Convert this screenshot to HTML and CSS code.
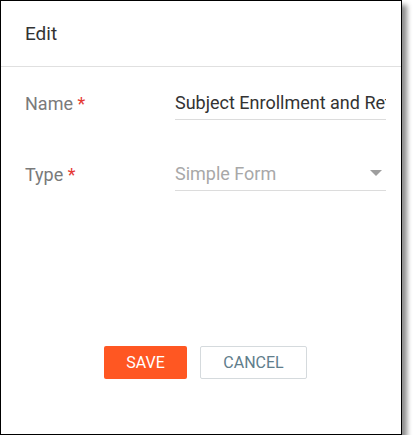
FILE: index.html
```html
<!DOCTYPE html>
<html>
<head>
<meta charset="utf-8">
<link rel="stylesheet" href="styles.css">
</head>
<body>
<div class="dialog">
  <div class="header">Edit</div>
  <div class="body">
    <div class="row">
      <div class="label">Name <span class="req">*</span></div>
      <div class="field"><span class="value">Subject Enrollment and Retention</span></div>
    </div>
    <div class="row">
      <div class="label">Type <span class="req">*</span></div>
      <div class="field select"><span class="placeholder">Simple Form</span><span class="caret"></span></div>
    </div>
  </div>
  <div class="actions">
    <button class="btn save">SAVE</button>
    <button class="btn cancel">CANCEL</button>
  </div>
</div>
</body>
</html>
```
FILE: styles.css
```css
html, body { margin: 0; padding: 0; background: #fff; }
body { font-family: Roboto, "Liberation Sans", sans-serif; }
.dialog {
  box-sizing: border-box;
  width: 402px;
  height: 435px;
  border: 1px solid #000;
  background: #fff;
  box-shadow: 5px 5px 5px rgba(0,0,0,0.45);
  display: flex;
  flex-direction: column;
}
.header {
  height: 66px;
  box-sizing: border-box;
  padding: 0 0 0 24px;
  display: flex;
  align-items: center;
  font-size: 19px;
  color: #333;
  border-bottom: 1px solid #e0e0e0;
}
.body {
  padding: 21px 15px 0 24px;
  display: flex;
  flex-direction: column;
  gap: 39px;
}
.row { display: flex; align-items: flex-end; }
.label {
  width: 150px;
  font-size: 18px;
  line-height: 21px;
  color: #7a7a7a;
  padding-bottom: 6px;
}
.req { color: #e53935; }
.field {
  flex: 1;
  height: 32px;
  box-sizing: border-box;
  border-bottom: 1px solid #dcdcdc;
  display: flex;
  align-items: flex-end;
  padding-bottom: 6px;
  overflow: hidden;
  white-space: nowrap;
  font-size: 18px;
  line-height: 21px;
}
.value { color: #333; }
.placeholder { color: #a8a8a8; flex: 1; }
.caret {
  width: 0; height: 0;
  border-left: 6px solid transparent;
  border-right: 6px solid transparent;
  border-top: 6px solid #9e9e9e;
  margin: 0 4px 8px 0;
}
.actions {
  margin-top: auto;
  padding: 0 0 55px 9px;
  display: flex;
  justify-content: center;
  gap: 13px;
}
.btn {
  font-family: Roboto, "Liberation Sans", sans-serif;
  font-size: 16px;
  height: 33px;
  border-radius: 2px;
  cursor: pointer;
}
.save {
  width: 83px;
  background: #ff5722;
  color: #fff;
  border: none;
}
.cancel {
  width: 107px;
  background: #fff;
  color: #607d8b;
  border: 1px solid #d5dadd;
}
```
